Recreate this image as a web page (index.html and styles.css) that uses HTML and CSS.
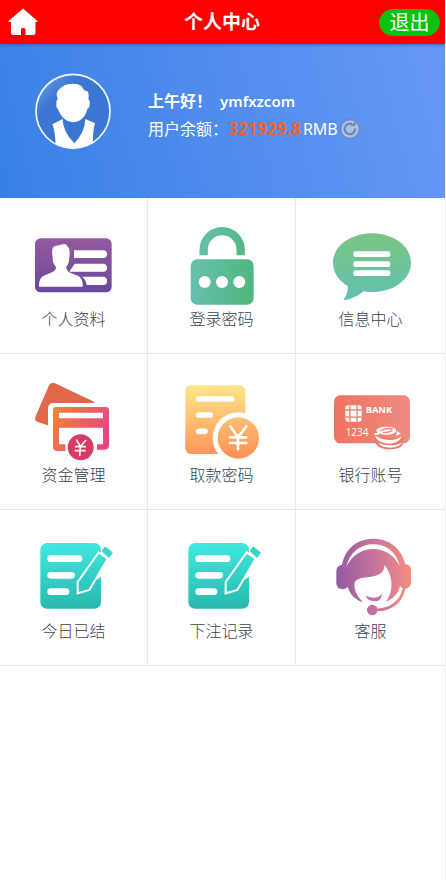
FILE: index.html
```html
<!DOCTYPE html>
<html lang="zh-CN">
<head>
<meta charset="utf-8">
<meta name="viewport" content="width=device-width, initial-scale=1">
<title>个人中心</title>
<link rel="stylesheet" href="styles.css">
</head>
<body>
<header class="topbar">
  <a class="home" href="#" aria-label="首页">
    <svg viewBox="0 0 30 28" width="30" height="28"><path fill="#fff" d="M15 0.500 L29.500 13 Q30 14 29 14 H27.500 V25 Q27.500 27 25.500 27 H17.500 V21.500 Q17.500 20 16 20 H14.500 Q13 20 13 21.500 V27 H5 Q3 27 3 25 V14 H1 Q0 14 0.500 13 Z"/></svg>
  </a>
  <h1 class="title">个人中心</h1>
  <button class="logout" type="button">退出</button>
</header>

<section class="profile">
  <svg class="avatar" viewBox="42 39 234 231" width="78" height="77" aria-hidden="true">
    <defs>
      <linearGradient id="av" x1="0" y1="0" x2="0.600" y2="0.600"><stop offset="0.150" stop-color="#6496e2"/><stop offset="0.500" stop-color="#3a76d2"/></linearGradient>
      <clipPath id="avc"><circle cx="159" cy="154" r="111"/></clipPath>
    </defs>
    <circle cx="159" cy="154" r="111" fill="url(#av)"/>
    <g fill="#fff" clip-path="url(#avc)">
      <path d="M113 118 Q106 98 116 90 Q132 70 158 71 Q180 70 187 82 Q190 92 202 94 Q208 100 205 118 Q211 122 209 136 Q207 145 202 147 Q192 186 158 187 Q126 184 114 147 Q109 146 109 132 Q108 122 113 118 Z"/>
      <path d="M97 193 L128 177 Q128 215 163 250 Q194 218 196 177 L225 190 Q217 215 219 270 H107 Q107 215 97 193 Z"/>
    </g>
    <circle cx="159" cy="154" r="111" fill="none" stroke="#f2f6ff" stroke-width="5"/>
  </svg>
  <div class="info">
    <p class="greeting"><span>上午好！</span><span class="name">ymfxzcom</span></p>
    <p class="balance"><span>用户余额：</span><strong class="amount">321929.8</strong><span>RMB</span>
      <button class="refresh" type="button" aria-label="刷新余额">
        <svg viewBox="0 0 20 20" width="20" height="20"><circle cx="10" cy="10" r="9.300" fill="#a9c0ea" stroke="#687fae"/><path d="M15 9.500 A5.200 5.200 0 1 1 9.500 4.800 H12" fill="none" stroke="#6e83ac" stroke-width="2"/><path d="M10.500 6.800 H15.500 V2.500 Z" fill="#6e83ac"/></svg>
      </button>
    </p>
  </div>
</section>

<nav class="menu">
  <a class="item" href="#">
    <svg class="icon" viewBox="39 18 240 252">
      <defs><linearGradient id="g1" x1="0" y1="0" x2="0" y2="1"><stop stop-color="#965a9f"/><stop offset="1" stop-color="#67499c"/></linearGradient></defs>
      <rect x="42" y="55" width="230" height="162" rx="17" fill="url(#g1)"/>
      <g fill="#fff">
        <path d="M54 200 Q53 174 68 167 L95 156 Q105 151 105 141 Q94 130 95 112 Q90 88 99 79 Q112 76 127 73 Q135 70 138 77 Q149 86 145 113 Q144 132 136 140 Q136 152 147 158 L171 167 Q187 175 185 200 Z"/>
        <path d="M159 91 H247 Q258 91 258 102 Q258 114 247 114 H159 Z"/>
        <path d="M161 131 H248 Q258 132 258 143 Q258 155 248 155 H145 Z"/>
        <path d="M183 170 H248 Q258 171 258 182 Q258 195 248 195 H197 Q195 178 183 170 Z"/>
      </g>
    </svg>
    <span>个人资料</span>
  </a>
  <a class="item" href="#">
    <svg class="icon" viewBox="36 18 240 252">
      <defs><linearGradient id="g2" gradientUnits="userSpaceOnUse" x1="62" y1="130" x2="250" y2="150"><stop stop-color="#68c0b0"/><stop offset="1" stop-color="#50b67d"/></linearGradient></defs>
      <path d="M101 106 V89 A55 55 0 0 1 212 89 V106" fill="none" stroke="url(#g2)" stroke-width="25"/>
      <rect x="62" y="118" width="189" height="136" rx="20" fill="url(#g2)"/>
      <g fill="#fff"><circle cx="104" cy="186" r="18"/><circle cx="156" cy="186" r="18"/><circle cx="208" cy="186" r="18"/></g>
    </svg>
    <span>登录密码</span>
  </a>
  <a class="item" href="#">
    <svg class="icon" viewBox="42 18 240 252">
      <defs><linearGradient id="g3" x1="0" y1="0" x2="0" y2="1"><stop stop-color="#7bc583"/><stop offset="1" stop-color="#62c1b1"/></linearGradient></defs>
      <path d="M165 40 C230 40 282 79 282 128 C282 178 230 216 165 216 Q151 217 140 214 Q121 230 96 238 Q86 241 79 240 Q94 220 92 198 Q48 170 48 128 C48 79 100 40 165 40 Z" fill="url(#g3)"/>
      <g fill="#fff"><rect x="109" y="94" width="111" height="17" rx="7"/><rect x="109" y="124" width="111" height="17" rx="7"/><rect x="109" y="151" width="111" height="17" rx="7"/></g>
    </svg>
    <span>信息中心</span>
  </a>
  <a class="item" href="#">
    <svg class="icon" viewBox="39 21 240 252">
      <defs><linearGradient id="g4" gradientUnits="userSpaceOnUse" x1="97" y1="110" x2="264" y2="200"><stop stop-color="#f08335"/><stop offset="1" stop-color="#ea3f88"/></linearGradient></defs>
      <path d="M84 31 Q90 20 102 25 L219 80 L219 84 H98 Q81 84 81 101 V151 L50 141 Q39 137 43 126 Z" fill="#df684b"/>
      <path fill-rule="evenodd" fill="url(#g4)" d="M106 96 H254 Q264 96 264 106 V210 Q264 224 250 224 H228 V208 H246 V158 H114 V208 H133 V228 H108 Q96 228 96 216 V106 Q96 96 106 96 Z M114 113 V130 H246 V113 Z"/>
      <circle cx="179" cy="217" r="39" fill="#d83a62"/>
      <path d="M166 194 L178 215 L195 195 M162 215 H195 M161 227 H194 M178 215 L176 243" fill="none" stroke="#fff" stroke-width="5"/>
    </svg>
    <span>资金管理</span>
  </a>
  <a class="item" href="#">
    <svg class="icon" viewBox="36 21 240 252">
      <defs><linearGradient id="g5" gradientUnits="userSpaceOnUse" x1="150" y1="31" x2="160" y2="250"><stop stop-color="#ffe588"/><stop offset="1" stop-color="#ff9057"/></linearGradient></defs>
      <rect x="46" y="31" width="180" height="206" rx="17" fill="url(#g5)"/>
      <circle cx="205" cy="189" r="77" fill="#fff"/>
      <circle cx="205" cy="189" r="62" fill="url(#g5)"/>
      <g fill="none" stroke="#fff" stroke-linecap="round"><path d="M86 72 H185 M86 120 H121 M86 169 H105" stroke-width="17"/><path d="M181 154 L204 187 L229 154 M180 187 H229 M180 204 H229 M204 187 V223" stroke-width="8"/></g>
    </svg>
    <span>取款密码</span>
  </a>
  <a class="item" href="#">
    <svg class="icon" viewBox="42 21 240 252">
      <defs><linearGradient id="g6"><stop stop-color="#ed735f"/><stop offset="1" stop-color="#ef8c82"/></linearGradient></defs>
      <rect x="51" y="61" width="228" height="144" rx="19" fill="url(#g6)"/>
      <rect x="85" y="91" width="49" height="49" rx="9" fill="#fff"/>
      <path d="M99 91 V140 M120 91 V140 M85 105 H134 M85 126 H134" stroke="#ef8170" stroke-width="4"/>
      <rect x="99" y="105" width="21" height="21" fill="#fff" stroke="#ef8170" stroke-width="3"/>
      <text class="bank" x="146" y="114">BANK</text>
      <text class="digits" x="86" y="183">1234</text>
      <path d="M174 187 V203 Q188 225 222 223 Q253 221 258 207 V190 Z" fill="#ec7a69"/>
      <g fill="#fff">
        <ellipse cx="208" cy="167" rx="30" ry="12"/>
        <path d="M174 180 Q180 206 217 206 Q249 204 254 183 Q242 195 217 195 Q188 194 174 180 Z"/>
        <path d="M184 204 Q192 218 222 218 Q249 216 256 202 Q243 211 222 211 Q200 212 184 204 Z"/>
        <path d="M172 174 H186 V179 H172 Z M240 168 L252 176 L238 182 Z"/>
      </g>
      <path d="M190 168 Q204 157 227 162 M198 173 Q216 173 226 167" fill="none" stroke="#ee7f70" stroke-width="4"/>
    </svg>
    <span>银行账号</span>
  </a>
  <a class="item" href="#">
    <svg class="icon" viewBox="39 24 240 252">
      <defs>
        <linearGradient id="g7" gradientUnits="userSpaceOnUse" x1="140" y1="39" x2="150" y2="236"><stop stop-color="#40e8df"/><stop offset="1" stop-color="#28b9ae"/></linearGradient>
        <g id="note">
          <rect x="58" y="39" width="182" height="197" rx="20" fill="url(#g7)"/>
          <path d="M89 86 H174 M89 136 H152 M89 185 H135" stroke="#fff" stroke-width="20" stroke-linecap="round"/>
          <path d="M242 54 L260 44 L280 68 L262 92 L240 124 V140 L226 150 Z" fill="#fff"/>
          <path d="M233 67 L260 86 L205 180 L170 190 L170 156 Z" fill="url(#g7)" stroke="#fff" stroke-width="6"/>
          <path d="M242 64 L250 51 Q252 49 255 51 L274 66 Q276 69 274 71 L264 84 Z" fill="#3bd5cd"/>
        </g>
      </defs>
      <use href="#note"/>
    </svg>
    <span>今日已结</span>
  </a>
  <a class="item" href="#">
    <svg class="icon" viewBox="39 24 240 252"><use href="#note"/></svg>
    <span>下注记录</span>
  </a>
  <a class="item" href="#">
    <svg class="icon" viewBox="42 24 240 252">
      <defs><linearGradient id="g9" gradientUnits="userSpaceOnUse" x1="58" y1="140" x2="282" y2="130"><stop stop-color="#925aa4"/><stop offset="0.500" stop-color="#c5749a"/><stop offset="1" stop-color="#f58c80"/></linearGradient></defs>
      <g fill="url(#g9)">
        <path d="M75 104 C86 52 123 26 169 26 C216 26 254 54 265 103 Q282 104 282 120 V160 Q280 174 265 176 C257 217 224 244 181 243 L180 236 C220 235 250 211 257 175 L249 169 C244 190 229 207 207 215 C232 181 228 139 203 105 C201 133 180 138 151 142 C129 145 113 147 112 163 C112 184 123 202 138 217 C112 208 99 192 92 170 C88 176 80 179 74 177 Q58 175 58 158 V123 Q59 106 75 104 Z"/>
        <circle cx="166" cy="240" r="16"/>
      </g>
      <path d="M88 110 C99 67 129 43 169 43 C209 43 239 66 249 110 Q223 58 169 57 Q116 57 88 110 Z" fill="#fff"/>
      <path d="M146 196 Q154 203 170 203 Q186 203 195 191 Q194 214 170 214 Q150 212 146 196 Z" fill="#c86bb0"/>
    </svg>
    <span>客服</span>
  </a>
</nav>
</body>
</html>
```
FILE: styles.css
```css
* { box-sizing: border-box; }
body {
  margin: 0;
  min-height: 100vh;
  background: #fff;
  border-right: 1px solid #f0f0f0;
  font-family: "Noto Sans", "Noto Sans CJK SC", sans-serif;
  font-size: 16px;
}
.topbar {
  display: grid;
  grid-template-columns: 1fr auto 1fr;
  align-items: center;
  height: 44px;
  margin-right: -1px;
  padding: 0 6px 0 4px;
  background: #f00;
  color: #fff;
}
.home { display: flex; padding-left: 4px; }
.title {
  margin: 0;
  font-size: 19px;
  line-height: 28px;
  font-weight: 700;
}
.logout {
  justify-self: end;
  width: 61px;
  height: 27px;
  padding: 0;
  border: 1px solid #16b61c;
  border-radius: 14px;
  background: #07c30d;
  color: #fff;
  font: 20px/24px "Noto Sans CJK SC", sans-serif;
}
.profile {
  display: flex;
  height: 154px;
  margin-right: -1px;
  padding: 29px 34px;
  gap: 36px;
  background: linear-gradient(75deg, #3880e6, #6898f6);
  box-shadow: inset 0 3px 3px -2px #3568b0;
  color: #fff;
}
.avatar { flex: none; }
.info { padding-top: 14px; }
.greeting, .balance {
  display: flex;
  align-items: center;
  margin: 0;
  height: 28px;
  line-height: 28px;
  white-space: nowrap;
}
.greeting { font-weight: 600; gap: 8px; }
.name { font-size: 15px; }
.amount {
  margin-right: 2px;
  color: #f2622e;
  font-size: 17px;
}
.refresh {
  display: flex;
  margin-left: 2px;
  padding: 0;
  border: 0;
  background: none;
}
.menu {
  display: grid;
  grid-template-columns: repeat(3, 1fr);
  margin-right: 1px;
}
.item {
  display: flex;
  flex-direction: column;
  align-items: center;
  height: 156px;
  padding-top: 28px;
  border-right: 1px solid #e8e8e8;
  border-bottom: 1px solid #e8e8e8;
  color: #36434f;
  font-weight: 300;
  line-height: 18px;
  text-decoration: none;
}
.item:nth-child(3n) { margin-right: -1px; border-right: 0; }
.icon { width: 80px; height: 84px; }
.bank { fill: #fff; font: 700 28px "Open Sans", sans-serif; }
.digits { fill: #fff; font: 400 30px "Open Sans", sans-serif; }
```
